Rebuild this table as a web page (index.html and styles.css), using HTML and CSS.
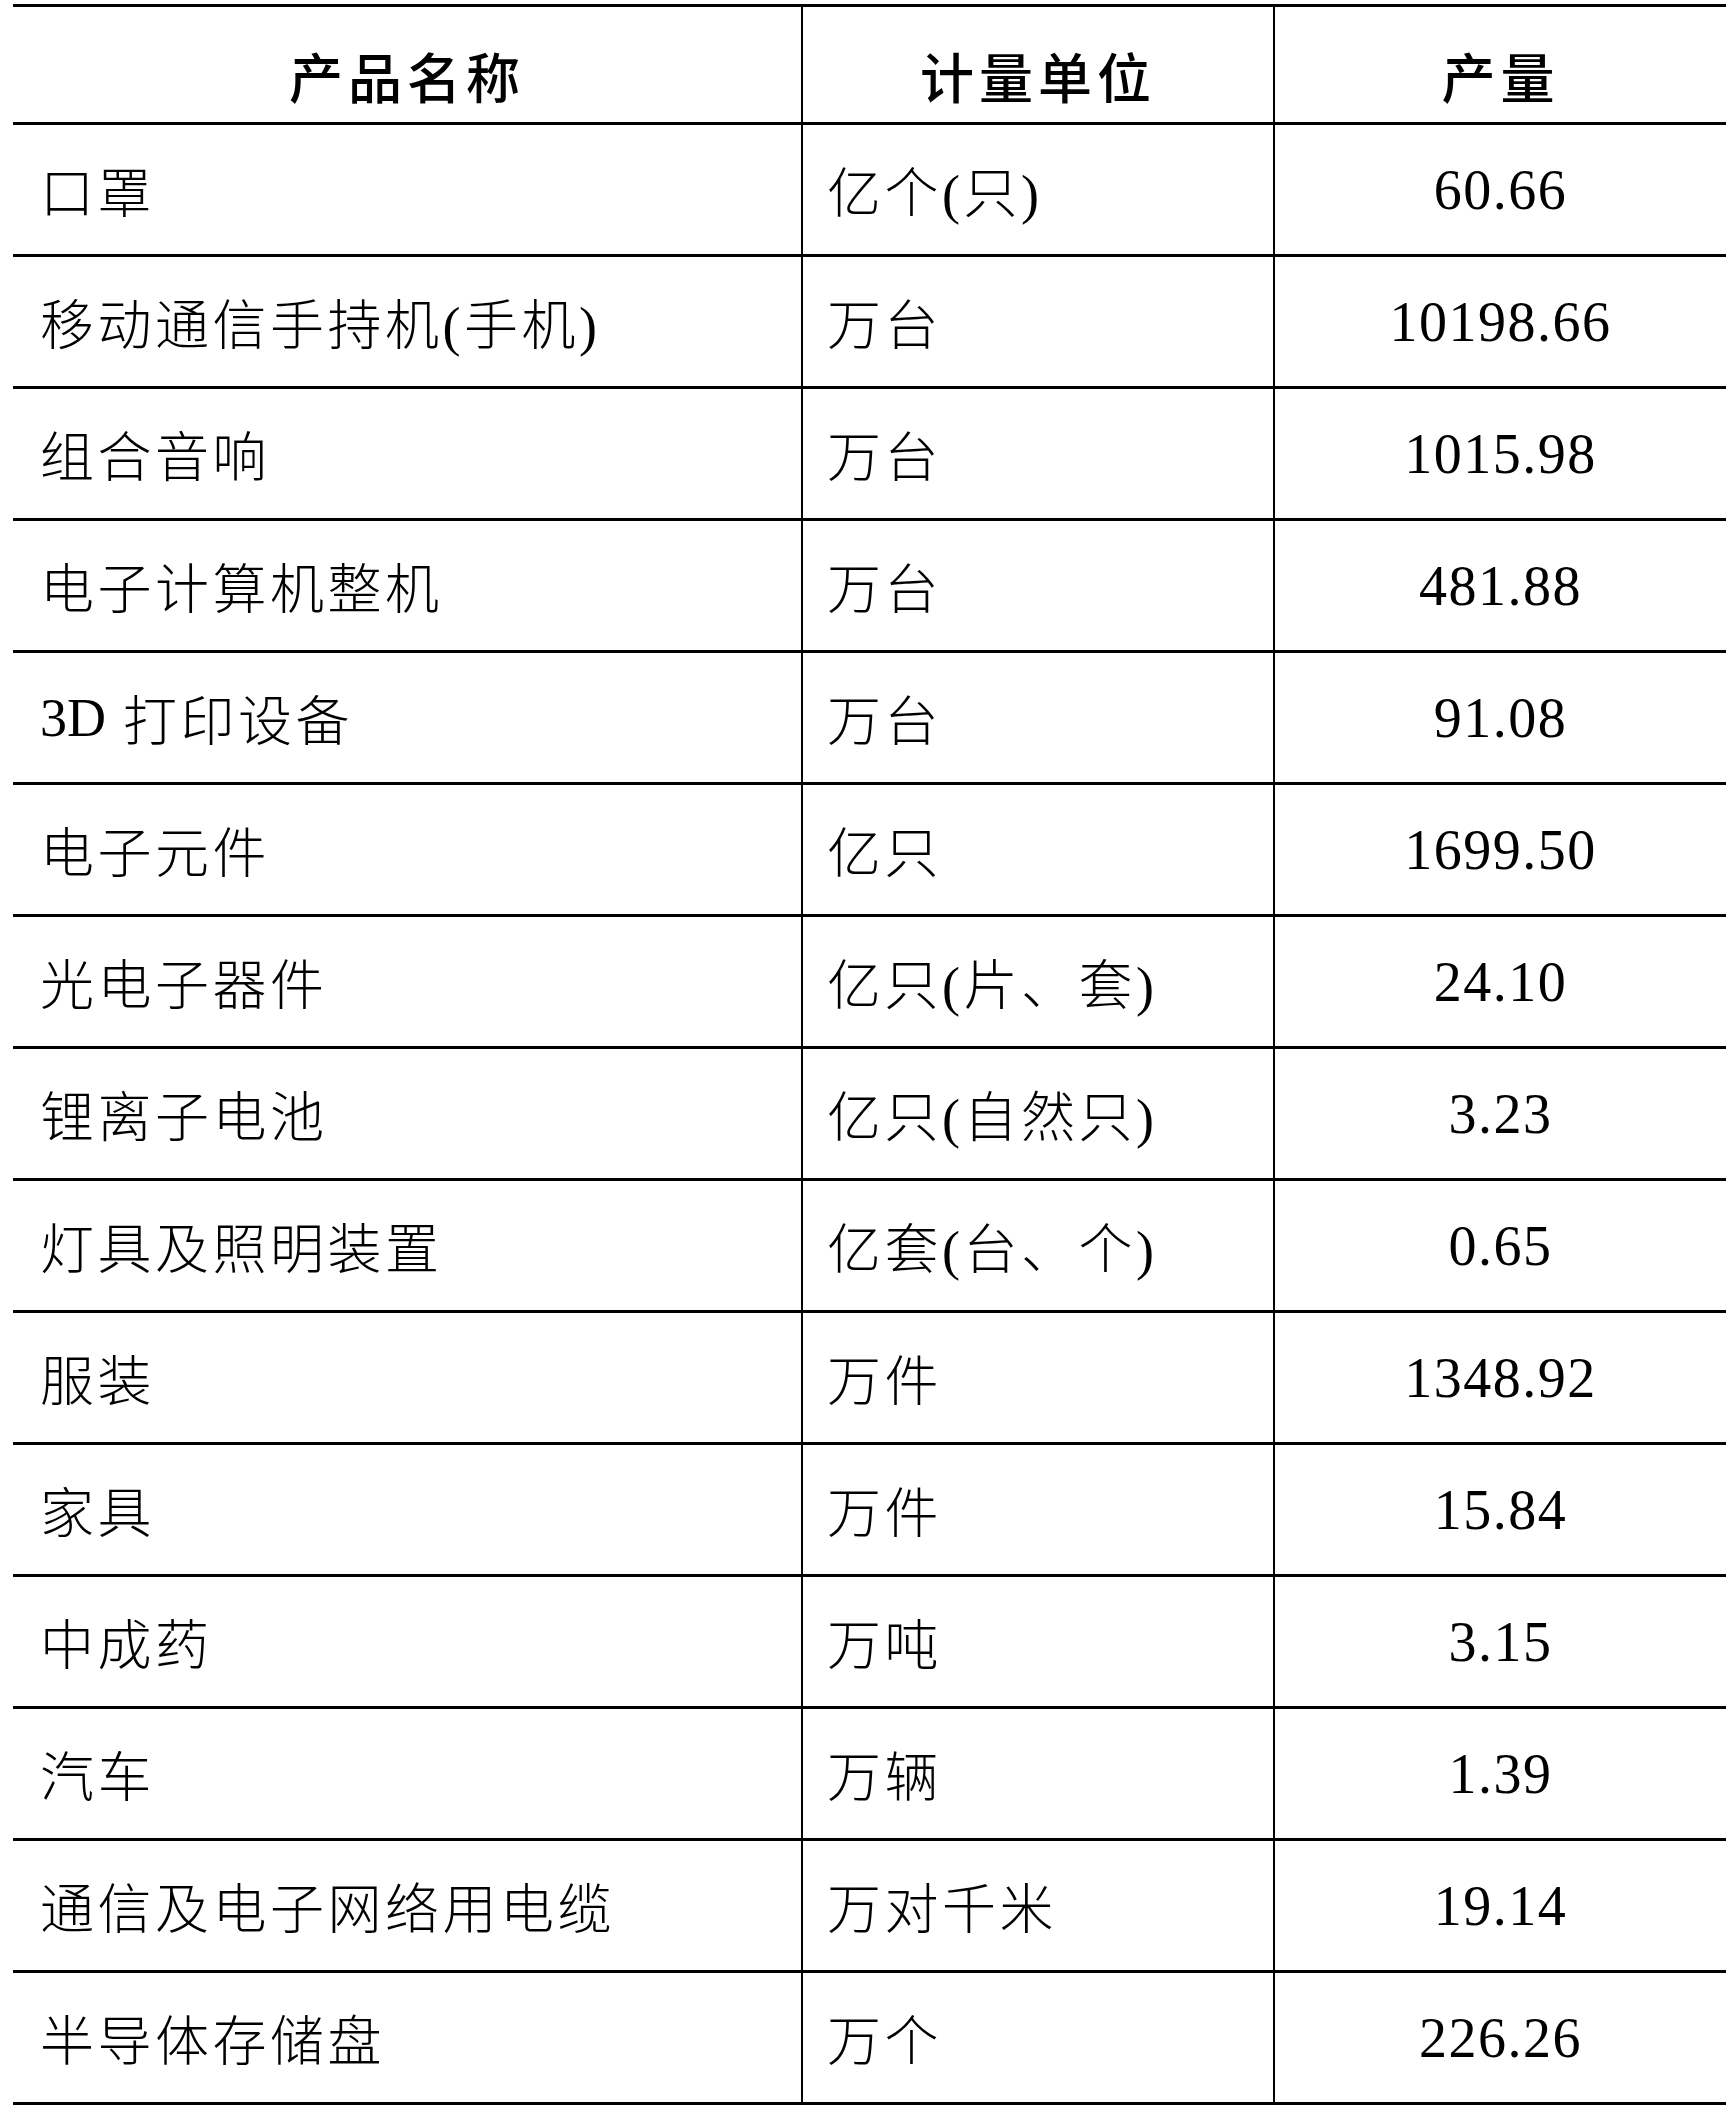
FILE: index.html
```html
<!DOCTYPE html>
<html lang="zh-CN">
<head>
<meta charset="utf-8">
<title>产品产量</title>
<link rel="stylesheet" href="styles.css">
</head>
<body>
<div class="table">
  <div class="row head">
    <div class="cell c1">产品名称</div>
    <div class="cell c2">计量单位</div>
    <div class="cell c3">产量</div>
  </div>
  <div class="row"><div class="cell c1">口罩</div><div class="cell c2">亿个(只)</div><div class="cell c3 num">60.66</div></div>
  <div class="row"><div class="cell c1">移动通信手持机(手机)</div><div class="cell c2">万台</div><div class="cell c3 num">10198.66</div></div>
  <div class="row"><div class="cell c1">组合音响</div><div class="cell c2">万台</div><div class="cell c3 num">1015.98</div></div>
  <div class="row"><div class="cell c1">电子计算机整机</div><div class="cell c2">万台</div><div class="cell c3 num">481.88</div></div>
  <div class="row"><div class="cell c1"><span class="lat">3D</span>&nbsp;打印设备</div><div class="cell c2">万台</div><div class="cell c3 num">91.08</div></div>
  <div class="row"><div class="cell c1">电子元件</div><div class="cell c2">亿只</div><div class="cell c3 num">1699.50</div></div>
  <div class="row"><div class="cell c1">光电子器件</div><div class="cell c2">亿只(片、套)</div><div class="cell c3 num">24.10</div></div>
  <div class="row"><div class="cell c1">锂离子电池</div><div class="cell c2">亿只(自然只)</div><div class="cell c3 num">3.23</div></div>
  <div class="row"><div class="cell c1">灯具及照明装置</div><div class="cell c2">亿套(台、个)</div><div class="cell c3 num">0.65</div></div>
  <div class="row"><div class="cell c1">服装</div><div class="cell c2">万件</div><div class="cell c3 num">1348.92</div></div>
  <div class="row"><div class="cell c1">家具</div><div class="cell c2">万件</div><div class="cell c3 num">15.84</div></div>
  <div class="row"><div class="cell c1">中成药</div><div class="cell c2">万吨</div><div class="cell c3 num">3.15</div></div>
  <div class="row"><div class="cell c1">汽车</div><div class="cell c2">万辆</div><div class="cell c3 num">1.39</div></div>
  <div class="row"><div class="cell c1">通信及电子网络用电缆</div><div class="cell c2">万对千米</div><div class="cell c3 num">19.14</div></div>
  <div class="row"><div class="cell c1">半导体存储盘</div><div class="cell c2">万个</div><div class="cell c3 num">226.26</div></div>
</div>
</body>
</html>
```
FILE: styles.css
```css
html, body {
  margin: 0;
  padding: 0;
  background: #ffffff;
}

body {
  padding-top: 4px;
  overflow: hidden;
  font-family: "Liberation Serif", "Noto Sans CJK SC", serif;
  color: #000000;
}

.table {
  margin-left: 13px;
  width: 1713px;
  border-top: 3px solid #000;
}

.row {
  display: grid;
  grid-template-columns: 788px 472px 1fr;
  height: 129px;
  border-bottom: 3px solid #000;
}

.row.head {
  height: 115px;
}

.cell {
  display: flex;
  align-items: center;
  font-size: 54px;
  font-weight: 300;
  letter-spacing: 3.5px;
  white-space: nowrap;
}

.head .cell {
  justify-content: center;
  padding-top: 22px;
  font-weight: 500;
  letter-spacing: 5px;
}

.c1 {
  padding-left: 27px;
}

.c2 {
  border-left: 2px solid #000;
  padding-left: 24px;
}

.c3 {
  border-left: 2px solid #000;
  justify-content: center;
}

.head .c1 {
  padding-left: 0;
}

.head .c2 {
  padding-left: 0;
}

.num {
  font-family: "Liberation Serif", serif;
  font-size: 56px;
  font-weight: 400;
  letter-spacing: 1.5px;
}

.lat {
  font-family: "Liberation Serif", serif;
  letter-spacing: 0;
}
```
